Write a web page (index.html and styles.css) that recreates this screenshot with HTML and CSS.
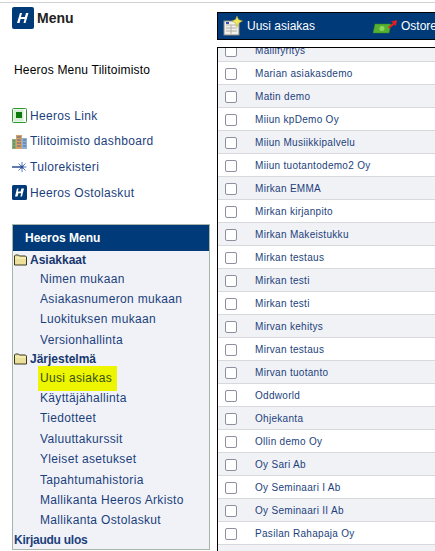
FILE: index.html
```html
<!DOCTYPE html>
<html lang="fi">
<head>
    <meta charset="UTF-8">
    <title>Heeros Menu</title>
    <link rel="stylesheet" href="styles.css">
</head>
<body>
    <div class="sivu">
        <div class="vasen">
            <div class="logo">
                <svg class="logo-iso" viewBox="0 0 22 22"><rect width="22" height="22" rx="2" fill="#003a78"/><path d="M5 16l3-10h2l-1.100 4h4L14 6h2.500l-3 10h-2l1.100-4h-4l-1.100 4z" fill="#fff"/></svg>
                <span>Menu</span>
            </div>
            <div class="otsikko">Heeros Menu Tilitoimisto</div>
            <div class="linkit">
                <a class="linkki" href="#">
                    <svg viewBox="0 0 15 15"><rect x=".5" y=".5" width="14" height="14" rx="1" fill="#fff" stroke="#2f9a2f"/><rect x="1.500" y="1.500" width="10" height="12" fill="#d5ecd5"/><rect x="4" y="4" width="6" height="6" fill="#0a7a0a"/></svg>
                    Heeros Link
                </a>
                <a class="linkki" href="#">
                    <svg viewBox="0 0 15 15"><rect y="5" width="4" height="10" fill="#8fb06a"/><rect x="4" y="1" width="6" height="14" fill="#d9a066"/><rect x="10" y="4" width="5" height="11" fill="#8fb0d8"/><path d="M5 3h4M5 6h4M5 9h4M5 12h4M1 7h2M1 10h2M1 13h2M11 6h3M11 9h3M11 12h3" stroke="#4a6a9a"/></svg>
                    Tilitoimisto dashboard
                </a>
                <a class="linkki" href="#">
                    <svg viewBox="0 0 15 15"><path d="M0 8h9" stroke="#2f4f8f" stroke-width="1.500"/><path d="M10 3v10M5 8h9.500M6.500 4.500l7 7M13.500 4.500l-7 7" stroke="#5a7ac0"/><circle cx="10" cy="8" r="1.500" fill="#2f4f8f"/></svg>
                    Tulorekisteri
                </a>
                <a class="linkki" href="#">
                    <svg viewBox="0 0 15 15"><rect width="15" height="15" rx="1.500" fill="#003a78"/><path d="M3 11.500l2-8h1.600l-.8 3.100h2.800l.8-3.100H12l-2 8H8.400l.8-3.300H6.400l-.8 3.300z" fill="#fff"/></svg>
                    Heeros Ostolaskut
                </a>
            </div>
            <div class="valikko">
                <div class="valikko-otsikko">Heeros Menu</div>
                <div class="kansio">
                    <svg viewBox="0 0 13 12"><path d="M.5 11V2l1-1h3l1 1h6l1 1v8z" fill="#ecdf9a" stroke="#3a3a20"/><path d="M1 4h11" stroke="#fff8d0"/></svg>
                    Asiakkaat
                </div>
                <a class="kohta" href="#">Nimen mukaan</a>
                <a class="kohta" href="#">Asiakasnumeron mukaan</a>
                <a class="kohta" href="#">Luokituksen mukaan</a>
                <a class="kohta" href="#">Versionhallinta</a>
                <div class="kansio">
                    <svg viewBox="0 0 13 12"><path d="M.5 11V2l1-1h3l1 1h6l1 1v8z" fill="#ecdf9a" stroke="#3a3a20"/><path d="M1 4h11" stroke="#fff8d0"/></svg>
                    Järjestelmä
                </div>
                <a class="kohta" href="#"><span class="korostus">Uusi asiakas</span></a>
                <a class="kohta" href="#">Käyttäjähallinta</a>
                <a class="kohta" href="#">Tiedotteet</a>
                <a class="kohta" href="#">Valuuttakurssit</a>
                <a class="kohta" href="#">Yleiset asetukset</a>
                <a class="kohta" href="#">Tapahtumahistoria</a>
                <a class="kohta" href="#">Mallikanta Heeros Arkisto</a>
                <a class="kohta" href="#">Mallikanta Ostolaskut</a>
                <a class="ulos" href="#">Kirjaudu ulos</a>
            </div>
        </div>
        <div class="oikea">
            <div class="tyokalut">
                <a class="nappi" href="#">
                    <svg class="nappi-uusi" viewBox="0 0 20 20"><rect x="1" y="5" width="15" height="14" fill="#f1f1ea" stroke="#8a8a80"/><path d="M3 9h11M3 12h11M3 15h11M8 9v9" stroke="#b0b0a8"/><rect x="3" y="6" width="3" height="2" fill="#3050c0"/><path d="M14 0l1.500 3.500L19.500 5 16 7l-2 4-1.500-4L9 5l3.500-1.500z" fill="#f0e860" stroke="#a8a030" stroke-width=".5"/></svg>
                    Uusi asiakas
                </a>
                <a class="nappi" href="#">
                    <svg class="nappi-osto" viewBox="0 0 24 16"><path d="M2 6h16l-2 9H0z" fill="#58b030" stroke="#2f8a20" stroke-width=".5"/><circle cx="9" cy="10.500" r="2.500" fill="#8ad860"/><path d="M15 9l5-4-2-1.500L24 2l-1 6-1.500-1.500-5 4z" fill="#e02020"/></svg>
                    Ostorekisteri
                </a>
            </div>
            <div class="lista">
                <ul class="rivit">
                    <li class="rivi"><span class="ruutu"></span><a href="#">Mallifyritys</a></li>
                    <li class="rivi"><span class="ruutu"></span><a href="#">Marian asiakasdemo</a></li>
                    <li class="rivi"><span class="ruutu"></span><a href="#">Matin demo</a></li>
                    <li class="rivi"><span class="ruutu"></span><a href="#">Miiun kpDemo Oy</a></li>
                    <li class="rivi"><span class="ruutu"></span><a href="#">Miiun Musiikkipalvelu</a></li>
                    <li class="rivi"><span class="ruutu"></span><a href="#">Miiun tuotantodemo2 Oy</a></li>
                    <li class="rivi"><span class="ruutu"></span><a href="#">Mirkan EMMA</a></li>
                    <li class="rivi"><span class="ruutu"></span><a href="#">Mirkan kirjanpito</a></li>
                    <li class="rivi"><span class="ruutu"></span><a href="#">Mirkan Makeistukku</a></li>
                    <li class="rivi"><span class="ruutu"></span><a href="#">Mirkan testaus</a></li>
                    <li class="rivi"><span class="ruutu"></span><a href="#">Mirkan testi</a></li>
                    <li class="rivi"><span class="ruutu"></span><a href="#">Mirkan testi</a></li>
                    <li class="rivi"><span class="ruutu"></span><a href="#">Mirvan kehitys</a></li>
                    <li class="rivi"><span class="ruutu"></span><a href="#">Mirvan testaus</a></li>
                    <li class="rivi"><span class="ruutu"></span><a href="#">Mirvan tuotanto</a></li>
                    <li class="rivi"><span class="ruutu"></span><a href="#">Oddworld</a></li>
                    <li class="rivi"><span class="ruutu"></span><a href="#">Ohjekanta</a></li>
                    <li class="rivi"><span class="ruutu"></span><a href="#">Ollin demo Oy</a></li>
                    <li class="rivi"><span class="ruutu"></span><a href="#">Oy Sari Ab</a></li>
                    <li class="rivi"><span class="ruutu"></span><a href="#">Oy Seminaari I Ab</a></li>
                    <li class="rivi"><span class="ruutu"></span><a href="#">Oy Seminaari II Ab</a></li>
                    <li class="rivi"><span class="ruutu"></span><a href="#">Pasilan Rahapaja Oy</a></li>
                    <li class="rivi"></li>
                </ul>
            </div>
        </div>
    </div>
</body>
</html>
```

FILE: styles.css
```css
html, body {
    margin: 0;
    height: 551px;
    overflow: hidden;
}
body {
    font-family: "Liberation Sans", Arial, sans-serif;
    font-size: 12px;
    background-color: #fff;
}
a {
    text-decoration: none;
    color: #1c3f7c;
}
.sivu {
    display: flex;
    height: 549px;
    margin-top: 2px;
    border-top: 1px solid #d2d2d2;
    box-sizing: border-box;
}
.vasen {
    flex: none;
    width: 217px;
    box-sizing: border-box;
    padding: 4px 5px 0 12px;
}
.logo {
    display: flex;
    align-items: center;
    gap: 3px;
    height: 22px;
    font-size: 14px;
    font-weight: bold;
    color: #222;
}
.logo-iso {
    width: 22px;
    height: 22px;
}
.otsikko {
    margin-top: 33px;
    padding-left: 2px;
    line-height: 16px;
    letter-spacing: .2px;
    color: #000;
}
.linkit {
    margin-top: 30px;
    display: flex;
    flex-direction: column;
    gap: 10.700px;
}
.linkki {
    display: flex;
    align-items: center;
    gap: 3px;
    height: 15px;
    letter-spacing: .33px;
}
.linkki svg {
    flex: none;
    width: 15px;
    height: 15px;
}
.valikko {
    width: 198px;
    box-sizing: border-box;
    height: 326px;
    margin-top: 24px;
    border: 1px solid #a9b5a9;
    background-color: #f0f2f7;
}
.valikko-otsikko {
    height: 26px;
    line-height: 26px;
    padding-left: 12px;
    font-weight: bold;
    color: #fff;
    background-color: #003a78;
}
.kansio {
    display: flex;
    align-items: center;
    gap: 3px;
    height: 17.500px;
    padding-left: 1px;
    font-weight: bold;
    color: #17376f;
}
.kansio svg {
    width: 13px;
    height: 12px;
}
.kohta {
    display: block;
    height: 20.400px;
    line-height: 20.400px;
    padding-left: 27px;
    letter-spacing: .33px;
}
.korostus {
    display: inline-block;
    padding: 2px 5px 2px 2px;
    margin: -2px -5px -2px -2px;
    line-height: 21px;
    background-color: #eef500;
    color: #33500f;
}
.ulos {
    display: block;
    height: 18px;
    line-height: 18px;
    padding-left: 1px;
    letter-spacing: -.25px;
    font-weight: bold;
}
.oikea {
    flex: none;
    width: 218px;
    overflow: hidden;
    padding-top: 9px;
}
.tyokalut {
    display: flex;
    gap: 58px;
    height: 28px;
    width: 300px;
    box-sizing: border-box;
    padding-left: 5px;
    background-color: #003a78;
    border: 1px solid #000;
    border-right: none;
    white-space: nowrap;
}
.nappi {
    display: flex;
    align-items: center;
    gap: 4px;
    color: #fff;
}
.nappi-uusi {
    width: 20px;
    height: 20px;
}
.nappi-osto {
    width: 24px;
    height: 16px;
}
.lista {
    height: 520px;
    margin-top: 7px;
    overflow: hidden;
    border-top: 1px solid #000;
    border-left: 1px solid #000;
}
.rivit {
    list-style: none;
    margin: -9px 0 0 0;
    padding: 0;
}
.rivi {
    display: flex;
    align-items: center;
    height: 23px;
    box-sizing: border-box;
    padding-left: 7px;
    border-bottom: 1px solid #d8d9dc;
    background-color: #fff;
    font-size: 10px;
    letter-spacing: .3px;
}
.rivi:nth-child(odd) {
    background-color: #f1f2f6;
}
.rivi a {
    margin-left: 18px;
}
.ruutu {
    flex: none;
    width: 12px;
    height: 12px;
    box-sizing: border-box;
    margin-top: 2px;
    border: 1px solid #8f8f9d;
    border-radius: 2px;
    background-color: #fff;
}
```
